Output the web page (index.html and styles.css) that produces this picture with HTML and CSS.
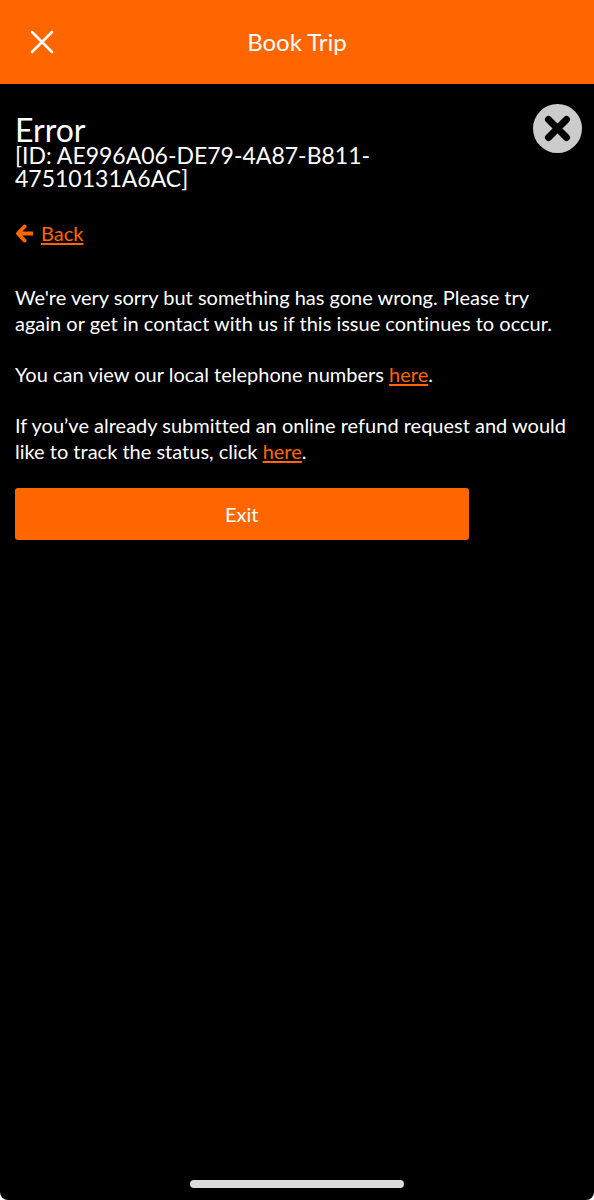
FILE: index.html
```html
<!DOCTYPE html>
<html lang="en">
<head>
    <meta charset="UTF-8">
    <meta name="viewport" content="width=device-width, initial-scale=1">
    <title>Book Trip</title>
    <link rel="stylesheet" href="styles.css">
</head>
<body>
    <div class="screen">
        <header class="topbar">
            <button class="icon-btn" type="button" aria-label="Close">
                <svg width="24" height="24" viewBox="0 0 24 24" fill="none" stroke="#fff" stroke-width="2.5" stroke-linecap="round">
                    <path d="M2 2L22 22M22 2L2 22"/>
                </svg>
            </button>
            <div class="topbar-title">Book Trip</div>
        </header>

        <main class="content">
            <div class="heading">
                <div class="heading-text">
                    <h1>Error</h1>
                    <p class="error-id">[ID: AE996A06-DE79-4A87-B811-47510131A6AC]</p>
                </div>
                <button class="icon-btn" type="button" aria-label="Dismiss">
                    <svg width="49" height="49" viewBox="0 0 49 49">
                        <circle cx="24.5" cy="24.5" r="24.5" fill="#ccc"/>
                        <path d="M15.5 15.5L33.5 33.5M33.5 15.5L15.5 33.5" stroke="#000" stroke-width="7" stroke-linecap="round"/>
                    </svg>
                </button>
            </div>

            <a class="back" href="#">
                <svg width="18" height="20" viewBox="0 0 18 20" fill="none" stroke="#ff6600" stroke-width="4">
                    <path d="M4 10.5H18"/>
                    <path d="M9.5 3.5L3 10.5L9.5 17.5" stroke-linecap="round" stroke-linejoin="round"/>
                </svg>
                <span>Back</span>
            </a>

            <div class="message">
                <p>We're very sorry but something has gone wrong. Please try again or get in contact with us if this issue continues to occur.</p>
                <p>You can view our local telephone numbers <a href="#">here</a>.</p>
                <p>If you’ve already submitted an online refund request and would like to track the status, click <a href="#">here</a>.</p>
            </div>

            <button class="exit" type="button">Exit</button>
        </main>

        <div class="home-bar"></div>
    </div>
</body>
</html>
```

FILE: styles.css
```css
* {
    box-sizing: border-box;
}

body {
    margin: 0;
    background: #fff;
    color: #fff;
    font-family: Lato, "Open Sans", sans-serif;
    font-size: 20px;
    line-height: 26px;
    font-variant-ligatures: none;
}

h1, p {
    margin: 0;
}

a {
    color: #ff6600;
    text-underline-offset: 2px;
}

button {
    font: inherit;
    color: inherit;
    border: 0;
    cursor: pointer;
}

.screen {
    display: flex;
    flex-direction: column;
    min-height: 100vh;
    background: #000;
    border-radius: 0 0 8px 8px;
}

.topbar {
    display: grid;
    grid-template-columns: 24px 1fr 24px;
    align-items: center;
    height: 84px;
    padding: 0 30px;
    background: #ff6600;
}

.topbar-title {
    font-size: 24px;
    text-align: center;
}

.icon-btn {
    display: flex;
    flex: none;
    padding: 0;
    background: none;
}

.content {
    flex: 1;
    padding: 20px 12px 20px 15px;
}

.heading {
    display: flex;
    justify-content: space-between;
    align-items: flex-start;
}

.heading-text {
    width: 70%;
    padding-top: 12px;
}

h1 {
    font-size: 32px;
    line-height: 28px;
    font-weight: 400;
}

.error-id {
    font-size: 23px;
    line-height: 23px;
}

.back {
    display: inline-flex;
    align-items: center;
    gap: 8px;
    margin-top: 30px;
    text-decoration: none;
}

.back span {
    text-decoration: underline;
}

.message {
    display: flex;
    flex-direction: column;
    gap: 25px;
    margin-top: 36px;
    padding-right: 10px;
}

.exit {
    display: block;
    width: 80%;
    height: 52px;
    margin-top: 24px;
    border-radius: 3px;
    background: #ff6600;
}

.home-bar {
    width: 36%;
    height: 8px;
    margin: 0 auto 12px;
    border-radius: 4px;
    background: #dcdcdc;
}
```
